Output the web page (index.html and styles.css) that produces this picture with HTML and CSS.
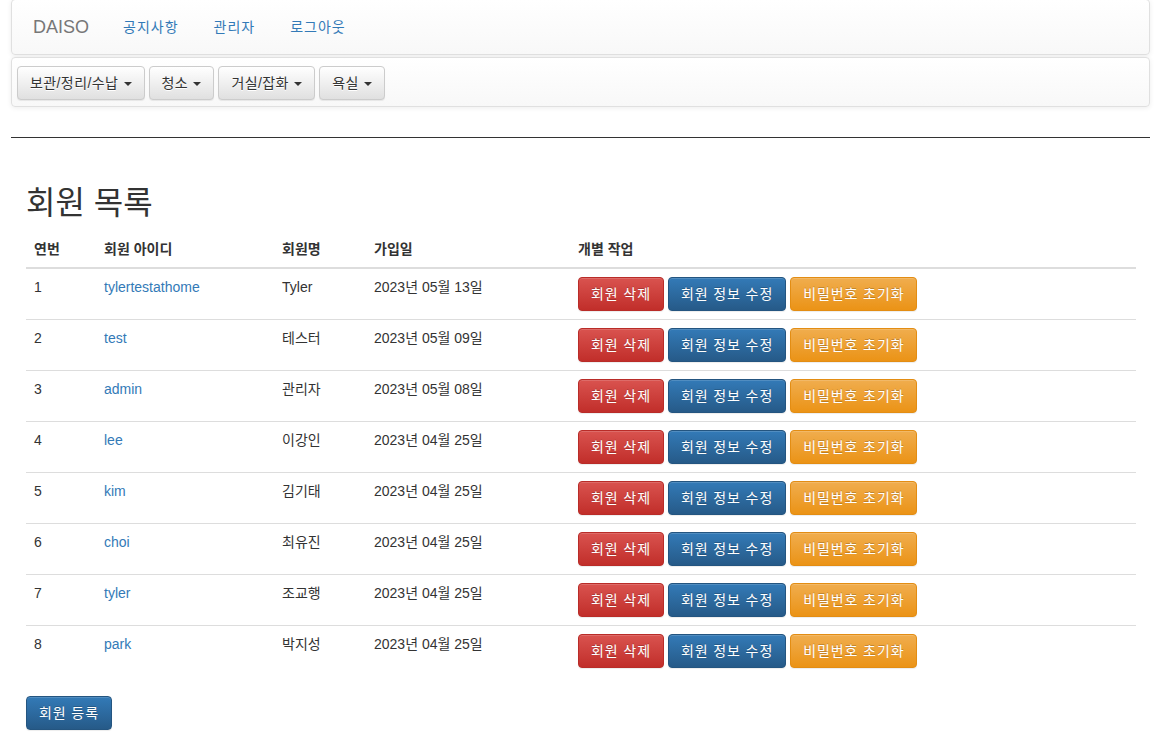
FILE: index.html
```html
<!DOCTYPE html>
<html lang="ko">
<head>
<meta charset="utf-8">
<link rel="stylesheet" href="styles.css">
<title>회원 목록</title>
</head>
<body>
<div class="page">
  <nav class="navbar top-nav">
    <a class="brand">DAISO</a>
    <ul class="nav-links">
      <li><a>공지사항</a></li>
      <li><a>관리자</a></li>
      <li><a>로그아웃</a></li>
    </ul>
  </nav>
  <nav class="navbar cat-nav">
    <button class="btn btn-default">보관/정리/수납 <span class="caret"></span></button>
    <button class="btn btn-default">청소 <span class="caret"></span></button>
    <button class="btn btn-default">거실/잡화 <span class="caret"></span></button>
    <button class="btn btn-default">욕실 <span class="caret"></span></button>
  </nav>
  <hr class="divider">
  <main class="content">
    <h1 class="title">회원 목록</h1>
    <table class="table">
      <thead>
        <tr><th class="c1">연번</th><th class="c2">회원 아이디</th><th class="c3">회원명</th><th class="c4">가입일</th><th class="c5">개별 작업</th></tr>
      </thead>
      <tbody>
        <tr><td>1</td><td><a>tylertestathome</a></td><td>Tyler</td><td>2023년 05월 13일</td><td class="actions"><button class="btn btn-danger">회원 삭제</button><button class="btn btn-primary">회원 정보 수정</button><button class="btn btn-warning">비밀번호 초기화</button></td></tr>
        <tr><td>2</td><td><a>test</a></td><td>테스터</td><td>2023년 05월 09일</td><td class="actions"><button class="btn btn-danger">회원 삭제</button><button class="btn btn-primary">회원 정보 수정</button><button class="btn btn-warning">비밀번호 초기화</button></td></tr>
        <tr><td>3</td><td><a>admin</a></td><td>관리자</td><td>2023년 05월 08일</td><td class="actions"><button class="btn btn-danger">회원 삭제</button><button class="btn btn-primary">회원 정보 수정</button><button class="btn btn-warning">비밀번호 초기화</button></td></tr>
        <tr><td>4</td><td><a>lee</a></td><td>이강인</td><td>2023년 04월 25일</td><td class="actions"><button class="btn btn-danger">회원 삭제</button><button class="btn btn-primary">회원 정보 수정</button><button class="btn btn-warning">비밀번호 초기화</button></td></tr>
        <tr><td>5</td><td><a>kim</a></td><td>김기태</td><td>2023년 04월 25일</td><td class="actions"><button class="btn btn-danger">회원 삭제</button><button class="btn btn-primary">회원 정보 수정</button><button class="btn btn-warning">비밀번호 초기화</button></td></tr>
        <tr><td>6</td><td><a>choi</a></td><td>최유진</td><td>2023년 04월 25일</td><td class="actions"><button class="btn btn-danger">회원 삭제</button><button class="btn btn-primary">회원 정보 수정</button><button class="btn btn-warning">비밀번호 초기화</button></td></tr>
        <tr><td>7</td><td><a>tyler</a></td><td>조교행</td><td>2023년 04월 25일</td><td class="actions"><button class="btn btn-danger">회원 삭제</button><button class="btn btn-primary">회원 정보 수정</button><button class="btn btn-warning">비밀번호 초기화</button></td></tr>
        <tr><td>8</td><td><a>park</a></td><td>박지성</td><td>2023년 04월 25일</td><td class="actions"><button class="btn btn-danger">회원 삭제</button><button class="btn btn-primary">회원 정보 수정</button><button class="btn btn-warning">비밀번호 초기화</button></td></tr>
      </tbody>
    </table>
    <button class="btn btn-primary">회원 등록</button>
  </main>
</div>
</body>
</html>
```
FILE: styles.css
```css
* { box-sizing: border-box; }
html, body { margin: 0; padding: 0; background: #fff; }
body {
  font-family: "Liberation Sans", "Noto Sans CJK KR", Arial, sans-serif;
  font-size: 14px;
  line-height: 1.42857;
  color: #333;
}
a { color: #337ab7; text-decoration: none; }

.page { padding: 0 20px 0 11px; }

.navbar {
  border: 1px solid #e0e0e0;
  border-radius: 4px;
  background-image: linear-gradient(to bottom, #fff 0, #f8f8f8 100%);
  box-shadow: inset 0 1px 0 rgba(255,255,255,.15), 0 1px 5px rgba(0,0,0,.075);
}
.top-nav {
  height: 56px;
  margin-top: -1px;
  display: flex;
  align-items: center;
  padding: 0 0 1px 21px;
}
.brand {
  font-size: 18px;
  color: #777;
  line-height: 20px;
  padding-right: 16px;
}
.nav-links {
  display: flex;
  list-style: none;
  margin: 0;
  padding: 0;
}
.nav-links a {
  display: block;
  padding: 0 17px 0 18px;
  line-height: 20px;
  letter-spacing: 1px;
  color: #337ab7;
}

.cat-nav {
  margin-top: 2px;
  height: 50px;
  display: flex;
  align-items: flex-start;
  gap: 4px;
  padding: 8px 5px 0;
}

.btn {
  display: inline-block;
  font-family: inherit;
  font-size: 14px;
  line-height: 20px;
  padding: 6px 12px;
  height: 34px;
  border: 1px solid transparent;
  border-radius: 4px;
  text-shadow: 0 -1px 0 rgba(0,0,0,.2);
  box-shadow: inset 0 1px 0 rgba(255,255,255,.15), 0 1px 1px rgba(0,0,0,.075);
  color: #fff;
  cursor: pointer;
  white-space: nowrap;
  letter-spacing: 0.9px;
}
.btn-default {
  color: #333;
  text-shadow: 0 1px 0 #fff;
  background-image: linear-gradient(to bottom, #fff 0, #e0e0e0 100%);
  border-color: #ccc;
  letter-spacing: 0.4px;
}
.btn-primary {
  background-image: linear-gradient(to bottom, #337ab7 0, #265a88 100%);
  border-color: #245580;
}
.btn-danger {
  background-image: linear-gradient(to bottom, #d9534f 0, #c12e2a 100%);
  border-color: #b92c28;
}
.btn-warning {
  background-image: linear-gradient(to bottom, #f0ad4e 0, #eb9316 100%);
  border-color: #e38d13;
}
.caret {
  display: inline-block;
  width: 0;
  height: 0;
  margin-left: 1px;
  vertical-align: middle;
  border-top: 4px solid #333;
  border-left: 4px solid transparent;
  border-right: 4px solid transparent;
}

.divider {
  margin: 30px 0 0;
  border: 0;
  border-top: 1px solid #333;
}

.content { padding: 0 14px 20px 15px; }
.title {
  font-size: 32px;
  font-weight: 400;
  line-height: 40px;
  margin: 45px 0 8px;
  color: #333;
}

.table {
  width: 100%;
  border-collapse: collapse;
  margin-bottom: 20px;
}
.table th, .table td {
  text-align: left;
  padding: 8px;
  line-height: 20px;
  vertical-align: top;
}
.table th {
  font-weight: bold;
  border-bottom: 2px solid #ddd;
  vertical-align: bottom;
}
.table td { border-top: 1px solid #ddd; }
.table tbody tr:first-child td { border-top: 0; }
.c1 { width: 70px; }
.c2 { width: 178px; }
.c3 { width: 92px; }
.c4 { width: 204px; }
.actions { display: flex; gap: 4px; }
```
